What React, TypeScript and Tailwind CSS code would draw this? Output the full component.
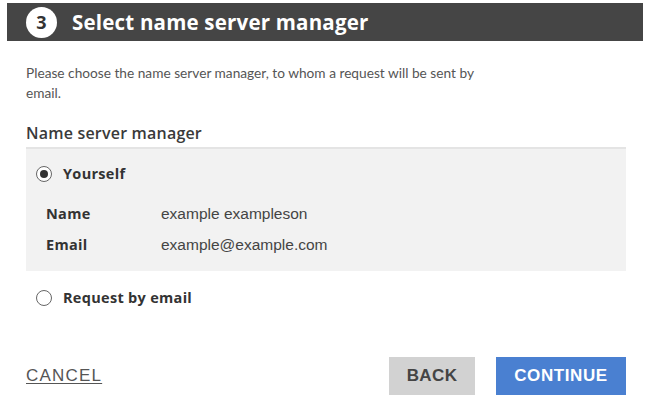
import React, { useState } from 'react';

export default function App() {
  const [choice, setChoice] = useState<'self' | 'email'>('self');

  const Radio = ({ checked }: { checked: boolean }) => (
    <span className="flex h-[16px] w-[16px] items-center justify-center rounded-full border-[1.5px] border-[#666] bg-white">
      {checked && <span className="h-[8px] w-[8px] rounded-full bg-[#333]" />}
    </span>
  );

  return (
    <div className="h-[415px] w-[650px] overflow-hidden bg-white font-['Open_Sans',sans-serif] text-[#444]">
      <div className="ml-[7px] mt-[3px] flex h-[38px] w-[636px] items-center bg-[#454545] pl-[19px]">
        <div className="flex h-[31px] w-[31px] items-center justify-center rounded-full bg-white text-[18px] font-bold text-[#333]">
          3
        </div>
        <h1 className="ml-[15px] text-[20.5px] font-bold tracking-[0.2px] text-white">Select name server manager</h1>
      </div>

      <div className="pl-[26px] pr-[24px]">
        <p className="mt-[22px] font-['Lato',sans-serif] text-[13.7px] leading-[20px] text-[#555]">
          Please choose the name server manager, to whom a request will be sent by
          <br />
          email.
        </p>

        <div className="mt-[20px] text-[16px] font-semibold leading-[20px] tracking-[0.2px] text-[#3a3a3a]">
          Name server manager
        </div>

        <div className="mt-[4px] h-[124px] border-t-2 border-[#e4e4e4] bg-[#f2f2f2]">
          <button
            type="button"
            onClick={() => setChoice('self')}
            className="ml-[10px] mt-[15px] flex h-[20px] items-center gap-[11px]"
          >
            <Radio checked={choice === 'self'} />
            <span className="text-[14.5px] font-bold tracking-[0.3px] text-[#333]">Yourself</span>
          </button>

          <div className="ml-[20px] mt-[20px] grid grid-cols-[115px_1fr] gap-y-[11px] text-[14.5px] leading-[20px]">
            <span className="font-bold tracking-[0.3px] text-[#333]">Name</span>
            <span className="font-['Liberation_Sans',sans-serif] text-[15.5px] text-[#444]">example exampleson</span>
            <span className="font-bold tracking-[0.3px] text-[#333]">Email</span>
            <span className="font-['Liberation_Sans',sans-serif] text-[15.5px] text-[#444]">example@example.com</span>
          </div>
        </div>

        <button
          type="button"
          onClick={() => setChoice('email')}
          className="ml-[10px] mt-[17px] flex h-[20px] items-center gap-[11px]"
        >
          <Radio checked={choice === 'email'} />
          <span className="text-[14.5px] font-bold tracking-[0.3px] text-[#333]">Request by email</span>
        </button>

        <div className="mt-[49px] flex items-center">
          <button
            type="button"
            className="font-['Liberation_Sans',sans-serif] text-[17px] tracking-[1.2px] text-[#555] underline underline-offset-2"
          >
            CANCEL
          </button>
          <div className="ml-auto flex gap-[21px]">
            <button
              type="button"
              className="h-[38px] w-[86px] bg-[#d2d2d2] font-['Liberation_Sans',sans-serif] text-[17px] font-bold tracking-[0.4px] text-[#444]"
            >
              BACK
            </button>
            <button
              type="button"
              className="h-[38px] w-[130px] bg-[#4a80d1] font-['Liberation_Sans',sans-serif] text-[17px] font-bold tracking-[0.6px] text-white"
            >
              CONTINUE
            </button>
          </div>
        </div>
      </div>
    </div>
  );
}
